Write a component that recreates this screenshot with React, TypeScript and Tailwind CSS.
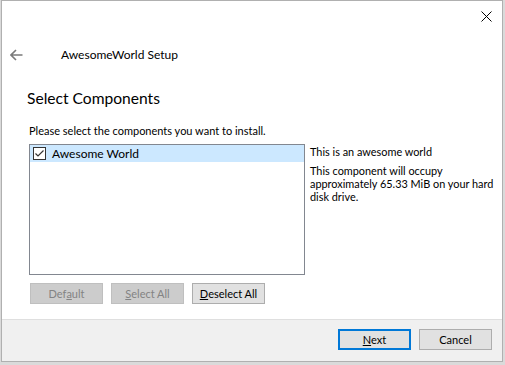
import React from "react";

const font = "font-['Lato',sans-serif]";

function Btn({ children, disabled, primary, className = "" }: { children: React.ReactNode; disabled?: boolean; primary?: boolean; className?: string }) {
  let cls = "w-[73px] h-[21px] shrink-0 flex items-center justify-center text-[11px] leading-none ";
  if (disabled) cls += "bg-[#cccccc] border border-[#bfbfbf] text-[#838383]";
  else if (primary) cls += "bg-[#e1e1e1] border-2 border-[#0078d7] text-black";
  else cls += "bg-[#e1e1e1] border border-[#adadad] text-black";
  return <div className={cls + " " + className}>{children}</div>;
}

export default function App() {
  return (
    <div className={`w-[505px] h-[365px] bg-[#dadada] overflow-hidden ${font}`}>
      <div className="ml-[1px] w-[502px] h-[362px] border border-[#b0b0b0] bg-white flex flex-col">
        {/* top bar with close */}
        <div className="h-[30px] flex justify-end items-center pr-[10px]">
          <svg width="11" height="11" viewBox="0 0 11 11">
            <path d="M0.5 0.5 L10.5 10.5 M10.5 0.5 L0.5 10.5" stroke="#000" strokeWidth="1" />
          </svg>
        </div>
        {/* header */}
        <div className="h-[48px] flex items-center">
          <div className="w-[59px] pl-[8px] flex items-center">
            <svg width="13" height="12" viewBox="0 0 13 12">
              <path d="M1 6 H12.5 M6 1 L1 6 L6 11" stroke="#7a7a7a" strokeWidth="1.6" fill="none" />
            </svg>
          </div>
          <span className="text-[12px] text-black">AwesomeWorld Setup</span>
        </div>
        {/* heading */}
        <div className="pl-[25px] mt-[9px] h-[22px] flex items-center text-[15.6px] text-[#000]">Select Components</div>
        {/* instruction */}
        <div className="pl-[27px] mt-[13px] h-[16px] flex items-center text-[11px]">Please select the components you want to install.</div>
        {/* list + description */}
        <div className="flex pl-[27px] mt-[5px]">
          <div className="w-[276px] h-[131px] shrink-0 border border-[#828790] bg-white">
            <div className="h-[17px] bg-[#cce8ff] flex items-center pl-[3px]">
              <div className="w-[13px] h-[13px] border border-[#333333] bg-white flex items-center justify-center">
                <svg width="11" height="11" viewBox="0 0 11 11">
                  <path d="M1.5 5.5 L4 8 L9.5 2.5" stroke="#333" strokeWidth="1.2" fill="none" />
                </svg>
              </div>
              <span className="ml-[6px] text-[12px]">Awesome World</span>
            </div>
          </div>
          <div className="ml-[5px] text-[10.9px] leading-[13px] whitespace-nowrap">
            <div className="mt-[1px]">This is an awesome world</div>
            <div className="mt-[6px]">This component will occupy<br />approximately 65.33 MiB on your hard<br />disk drive.</div>
          </div>
        </div>
        {/* buttons */}
        <div className="flex pl-[28px] mt-[8px] gap-[8px]">
          <Btn disabled>Def<u>a</u>ult</Btn>
          <Btn disabled><u>S</u>elect All</Btn>
          <Btn><u>D</u>eselect All</Btn>
        </div>
        {/* footer */}
        <div className="mt-auto h-[42px] bg-[#f0f0f0] border-t border-[#dfdfdf] flex justify-end items-start pt-[9px] pr-[10px] gap-[8px]">
          <Btn primary><u>N</u>ext</Btn>
          <Btn>Cancel</Btn>
        </div>
      </div>
    </div>
  );
}
